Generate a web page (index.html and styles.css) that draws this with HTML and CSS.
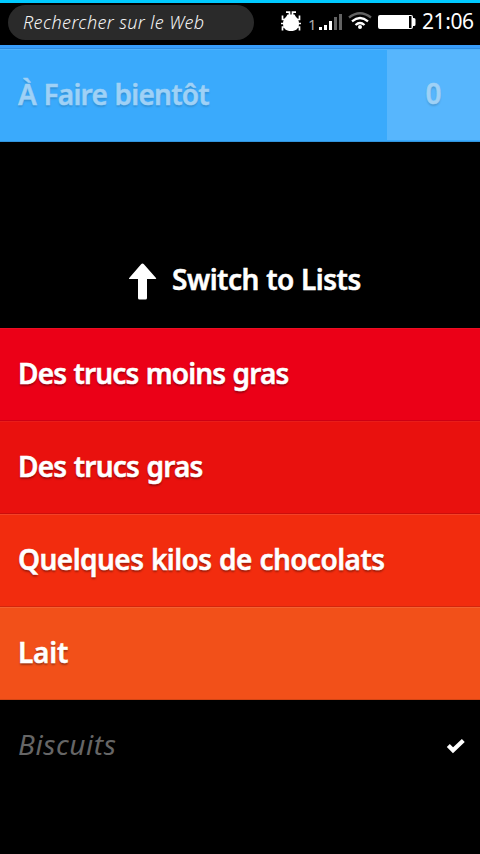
FILE: index.html
```html
<!DOCTYPE html>
<html lang="fr">
<head>
<meta charset="utf-8">
<title>À Faire bientôt</title>
<link rel="stylesheet" href="styles.css">
</head>
<body>
<header class="status">
  <div class="search"><span class="t-search">Rechercher sur le Web</span></div>
  <svg class="bug" width="22" height="22" viewBox="0 0 22 22"><path d="M6 1.200h3.500v4M16 1.200h-3.500v4M2.500 4.500v4h4M19.500 4.500v4h-4M1 12.500h20M2.500 19.500v-3.500h4M19.500 19.500v-3.500h-4" fill="none" stroke="#fff" stroke-width="1.700"/><path d="M7.500 3.500h7l1.500 2.500q3 2.500 3 6.500c0 5-3 7.500-8 7.500s-8-2.500-8-7.500q0-4 3-6.500z" fill="#fff"/></svg>
  <span class="sim">1</span>
  <svg class="signal" width="24" height="18" viewBox="0 0 24 18"><path d="M0 14h3v3H0zM5 12h3v5H5zM10 8h3v9h-3z" fill="#fff"/><path d="M15 4h3v13h-3zM20 1h3v16h-3z" fill="#626262"/></svg>
  <svg class="wifi" width="24" height="18" viewBox="0 0 24 18"><g fill="none" stroke-width="2.300"><path d="M1 5.500Q12-3 23 5.500" stroke="#626262"/><path d="M4 9.300q8-6.600 16 0M7.500 13q4.500-4 9 0" stroke="#fff"/></g><circle cx="12" cy="15" r="2" fill="#fff"/></svg>
  <svg class="battery" width="38" height="14" viewBox="0 0 38 14"><path fill-rule="evenodd" d="M2 0h31q2 0 2 2v1h1q1.500 0 1.500 1.500v5Q37.500 11 36 11h-1v1q0 2-2 2H2Q0 14 0 12V2Q0 0 2 0zM31 1v12h2.500V1z" fill="#fff"/></svg>
  <span class="clock">21:06</span>
</header>
<div class="strip"></div>
<section class="row current"><span class="t-current">À Faire bientôt</span><span class="count">0</span></section>
<div class="switch">
  <svg width="28" height="37" viewBox="0 0 28 37"><path d="M13.500 .5q.8 0 1.400.7L27 15q.6 1-.5 1H18v19q0 1.500-1.500 1.500h-6Q9 36.500 9 35V16H.7q-1.200 0-.5-1L12.100 1.200q.6-.7 1.400-.7z" fill="#fff"/></svg>
  <span class="t-switch">Switch to Lists</span>
</div>
<main>
  <div class="row r1"><span class="t-r1">Des trucs moins gras</span></div>
  <div class="row r2"><span class="t-r2">Des trucs gras</span></div>
  <div class="row r3"><span class="t-r3">Quelques kilos de chocolats</span></div>
  <div class="row r4"><span class="t-r4">Lait</span></div>
  <div class="row done"><span class="t-done">Biscuits</span><svg width="20" height="16" viewBox="0 0 20 16"><path d="M2.300 7.500l4.700 4.700L17.300 2.500" fill="none" stroke="#fff" stroke-width="4.200"/></svg></div>
</main>
</body>
</html>
```
FILE: styles.css
```css
* { box-sizing: border-box; }
body { margin: 0; height: 854px; overflow: hidden; background: #000; color: #fff; font-family: "Noto Sans", "Open Sans", sans-serif; }
svg { display: block; flex: none; }
.status { display: flex; height: 45px; border-top: 3px solid #00caff; white-space: nowrap; }
.search { flex: none; width: 246px; height: 35px; margin: 2px 0 0 8px; padding-left: 15px; border-radius: 18px; background: #2a2a2a; font-size: 18px; font-style: italic; font-weight: 300; line-height: 34px; letter-spacing: .4px; color: #f4f4f4; }
.bug { margin: 8px 0 0 26px; }
.sim { width: 10px; margin-left: 6px; font-size: 15px; line-height: 20px; padding-top: 11px; color: #aaa; }
.signal { margin: 10px 0 0 1px; }
.wifi { margin: 9px 0 0 5px; }
.battery { margin: 12px 0 0 6px; }
.clock { margin-left: 6px; font-size: 21px; line-height: 36px; letter-spacing: -.4px; }
.strip { height: 4px; background: #389dfa; border-bottom: 1px solid #308de1; }
.row { display: flex; align-items: center; height: 93px; padding-left: 18px; border-top: 1px solid rgba(255,255,255,.1); border-bottom: 1px solid rgba(0,0,0,.12); font-size: 28px; font-weight: 600; line-height: 38px; white-space: nowrap; text-shadow: 0 2px 2px rgba(0,0,0,.35); -webkit-text-stroke: .5px; }
.row > span { position: relative; top: -2px; }
.current { background: #3aaafc; color: #9fd1f6; text-shadow: 0 2px 2px rgba(0,0,0,.15); }
.row > .count { top: 0; align-self: stretch; width: 93px; margin-left: auto; margin-bottom: 1px; background: #57b6fd; text-align: center; line-height: 86px; }
.switch { display: flex; height: 186px; padding: 121px 0 0 129px; font-size: 28px; font-weight: 600; line-height: 32px; white-space: nowrap; -webkit-text-stroke: .5px; }
.t-switch { margin-left: 15px; letter-spacing: -.5px; word-spacing: .5px; }
.t-current { letter-spacing: -.75px; word-spacing: .9px; }
.t-r1 { letter-spacing: -.82px; word-spacing: .7px; }
.t-r2 { letter-spacing: -.8px; word-spacing: 1px; }
.t-r3 { letter-spacing: -.55px; word-spacing: .8px; }
.t-r4 { letter-spacing: -.2px; }
.t-done { letter-spacing: .6px; }
.r1 { background: #eb0017; border-top-color: rgba(255,255,255,.05); }
.r2 { background: #e9110e; border-top-color: rgba(255,255,255,.05); }
.r3 { background: #f22c0e; }
.r4 { background: #f25019; }
.done { border-color: transparent; color: #666; font-style: italic; font-weight: 400; text-shadow: none; -webkit-text-stroke: 0; }
.done .t-done { top: -3px; }
.done svg { margin: 0 14px 2px auto; }
```
